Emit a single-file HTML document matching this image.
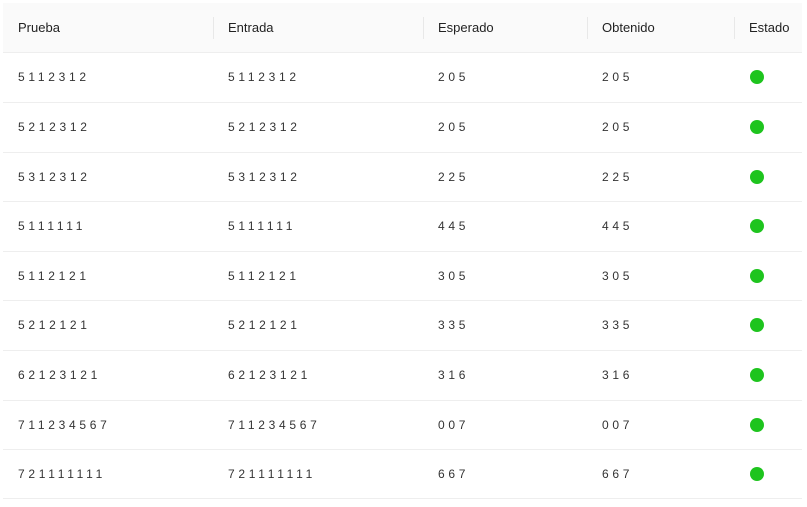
<html><head><style>
body{margin:0;background:#fff;font-family:"Liberation Sans",sans-serif;font-size:13px;color:#222;}
.t{position:absolute;left:3px;top:3px;width:799px;}
.h{height:49px;background:#fafafa;border-bottom:1px solid #eee;position:relative;}
.r{border-bottom:1px solid #eee;position:relative;}
.c{position:absolute;top:0;line-height:49px;}
.r .c{letter-spacing:3.7px;font-size:12px;color:#333;}
.s{position:absolute;top:14px;height:22px;width:1px;background:#e8e8e8;}
.d{position:absolute;left:747px;top:17px;width:14px;height:14px;border-radius:50%;background:#1ec41e;}
</style></head><body><div class="t">
<div class="h"><span class="c" style="left:15px">Prueba</span><span class="s" style="left:210px"></span><span class="c" style="left:225px">Entrada</span><span class="s" style="left:420px"></span><span class="c" style="left:435px">Esperado</span><span class="s" style="left:584px"></span><span class="c" style="left:599px">Obtenido</span><span class="s" style="left:731px"></span><span class="c" style="left:746px">Estado</span></div>
<div class="r" style="height:49px"><span class="c" style="left:15px">5112312</span><span class="c" style="left:225px">5112312</span><span class="c" style="left:435px">205</span><span class="c" style="left:599px">205</span><span class="d"></span></div>
<div class="r" style="height:49px"><span class="c" style="left:15px">5212312</span><span class="c" style="left:225px">5212312</span><span class="c" style="left:435px">205</span><span class="c" style="left:599px">205</span><span class="d"></span></div>
<div class="r" style="height:48px"><span class="c" style="left:15px">5312312</span><span class="c" style="left:225px">5312312</span><span class="c" style="left:435px">225</span><span class="c" style="left:599px">225</span><span class="d"></span></div>
<div class="r" style="height:49px"><span class="c" style="left:15px">5111111</span><span class="c" style="left:225px">5111111</span><span class="c" style="left:435px">445</span><span class="c" style="left:599px">445</span><span class="d"></span></div>
<div class="r" style="height:48px"><span class="c" style="left:15px">5112121</span><span class="c" style="left:225px">5112121</span><span class="c" style="left:435px">305</span><span class="c" style="left:599px">305</span><span class="d"></span></div>
<div class="r" style="height:49px"><span class="c" style="left:15px">5212121</span><span class="c" style="left:225px">5212121</span><span class="c" style="left:435px">335</span><span class="c" style="left:599px">335</span><span class="d"></span></div>
<div class="r" style="height:49px"><span class="c" style="left:15px">62123121</span><span class="c" style="left:225px">62123121</span><span class="c" style="left:435px">316</span><span class="c" style="left:599px">316</span><span class="d"></span></div>
<div class="r" style="height:48px"><span class="c" style="left:15px">711234567</span><span class="c" style="left:225px">711234567</span><span class="c" style="left:435px">007</span><span class="c" style="left:599px">007</span><span class="d"></span></div>
<div class="r" style="height:48px"><span class="c" style="left:15px">721111111</span><span class="c" style="left:225px">721111111</span><span class="c" style="left:435px">667</span><span class="c" style="left:599px">667</span><span class="d"></span></div>
</div></body></html>
